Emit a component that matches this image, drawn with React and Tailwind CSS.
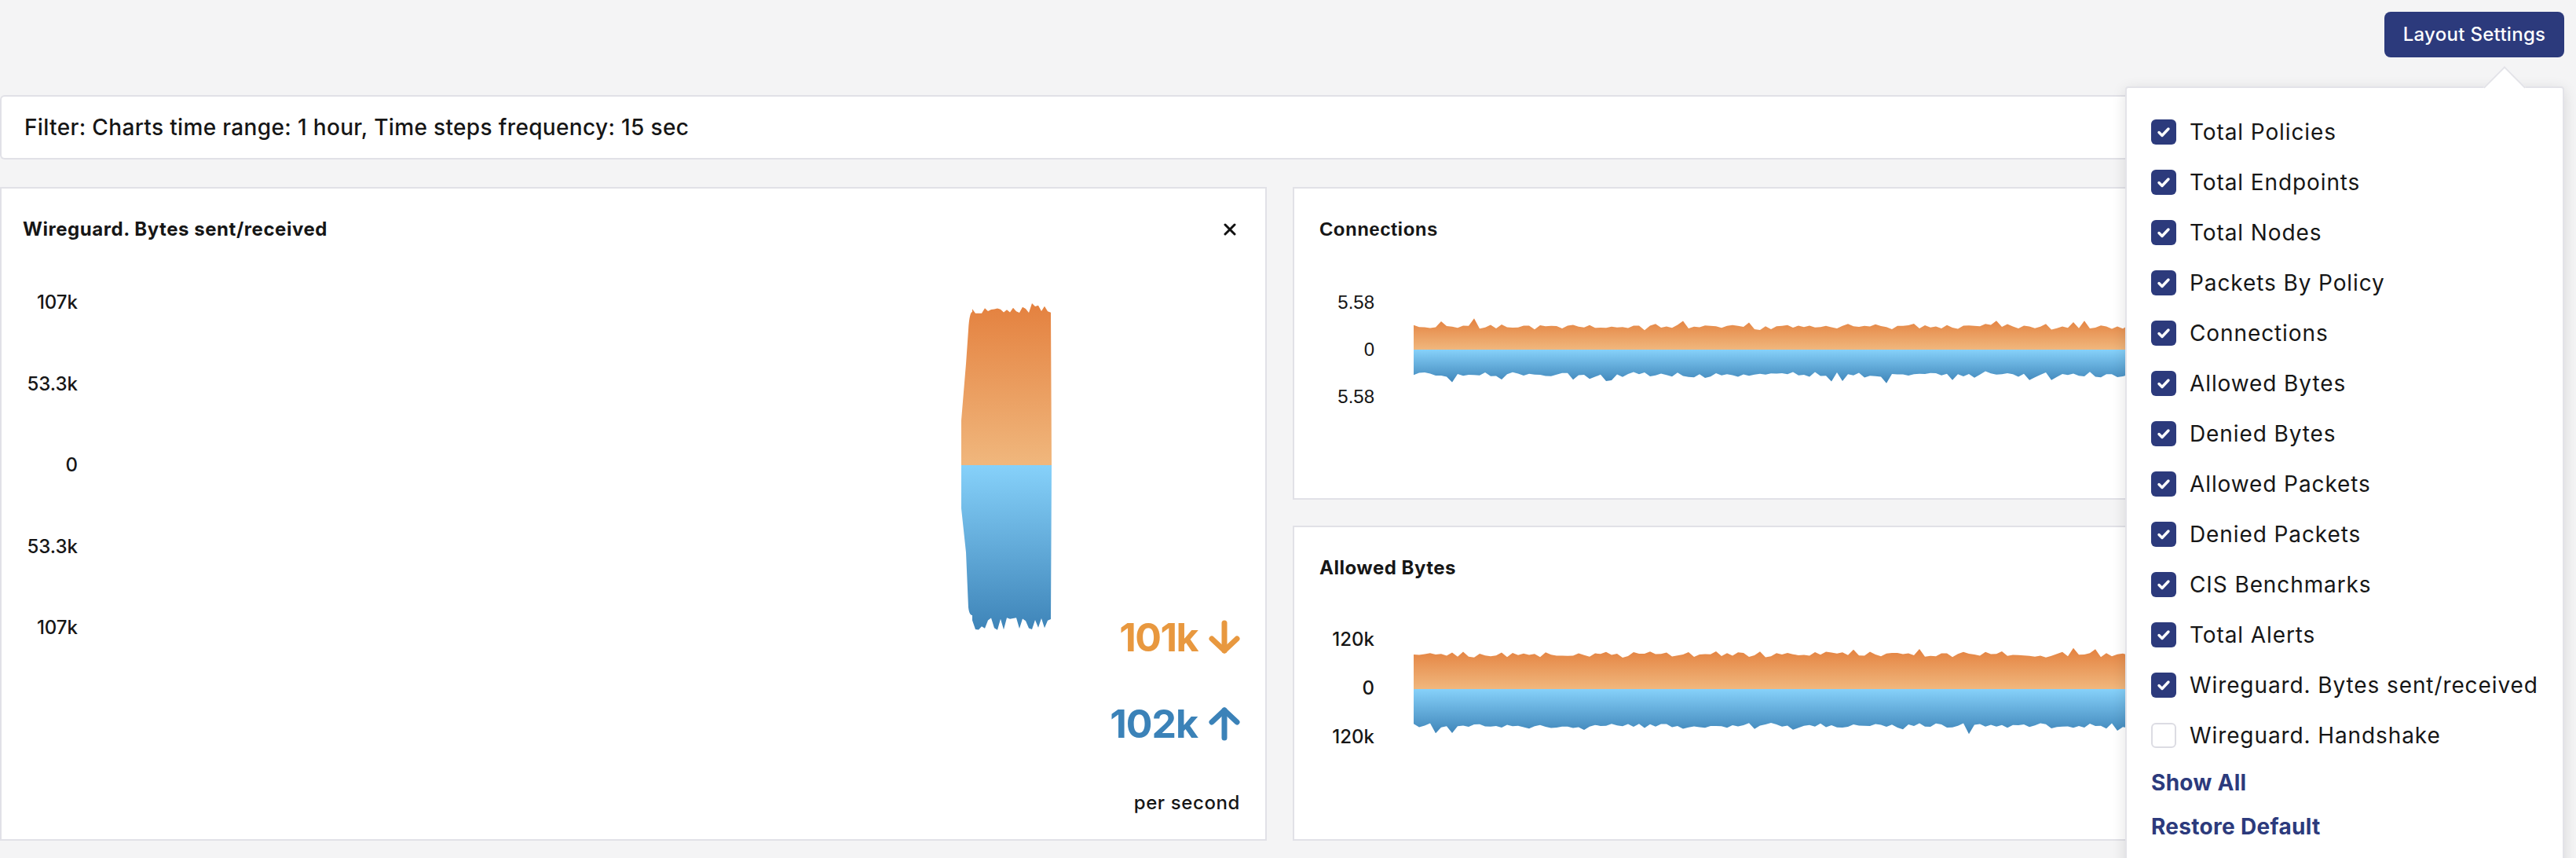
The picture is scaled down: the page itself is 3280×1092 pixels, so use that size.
import React from "react";

// deterministic jitter so the charts look the same on every render
const rnd = (i, seed) => {
  const x = Math.sin(i * 12.9898 + seed * 78.233) * 43758.5453;
  return x - Math.floor(x);
};

const smooth = (i, seed) => rnd(i, seed) * 0.6 + rnd(i + 1, seed) * 0.4;

// wide strip area: orange above zero, blue below
const stripPath = (width, zero, amp, seed, up) => {
  const pts = [];
  for (let x = 0; x <= width; x += 7) {
    let v = amp + (smooth(x, seed) - 0.5) * 9;
    if (rnd(x, seed + 3) > 0.93) v += 7;
    pts.push(`L${x},${up ? zero - v : zero + v}`);
  }
  return `M0,${zero} ${pts.join(" ")} L${width},${zero} Z`;
};

const barTop = () => {
  const pts = [];
  for (let x = 1118; x <= 1219; x += 4) {
    const y = 22 + (smooth(x, 5) - 0.5) * 12 + (x > 1190 && x < 1205 ? -6 : 0);
    pts.push(`L${x},${y.toFixed(1)}`);
  }
  return `M1104,219 L1104,162 L1110,90 L1113,47 C1114,30 1116,24 1118,24 ${pts.join(" ")} L1219,219 Z`;
};

const barBottom = () => {
  const pts = [];
  for (let x = 1118; x <= 1219; x += 4) {
    const spike = rnd(x, 9) > 0.6 ? 12 : 0;
    const y = 412 + smooth(x, 11) * 6 + spike;
    pts.push(`L${x},${y.toFixed(1)}`);
  }
  return `M1104,219 L1104,274 L1110,330 L1113,400 C1114,408 1116,410 1118,410 ${pts.join(" ")} L1219,219 Z`;
};

const Grads = ({ id }) => (
  <defs>
    <linearGradient id={`o${id}`} x1="0" y1="0" x2="0" y2="1">
      <stop offset="0%" stopColor="#e4813f" />
      <stop offset="100%" stopColor="#f0b77d" />
    </linearGradient>
    <linearGradient id={`b${id}`} x1="0" y1="0" x2="0" y2="1">
      <stop offset="0%" stopColor="#86d1fa" />
      <stop offset="100%" stopColor="#3e84b8" />
    </linearGradient>
  </defs>
);

const Arrow = ({ color, up }) => (
  <svg width="40" height="44" viewBox="0 0 40 44" fill="none" stroke={color} strokeWidth="7" strokeLinecap="round" strokeLinejoin="round">
    {up ? (
      <>
        <path d="M20 40V5" />
        <path d="M4 20 20 5l16 15" />
      </>
    ) : (
      <>
        <path d="M20 4v35" />
        <path d="M4 24l16 15 16-15" />
      </>
    )}
  </svg>
);

const CheckBox = ({ checked }) =>
  checked ? (
    <span className="flex w-[32px] h-[32px] shrink-0 items-center justify-center rounded-[6px] bg-[#2c3a7c]">
      <svg width="20" height="20" viewBox="0 0 20 20" fill="none" stroke="white" strokeWidth="3.4" strokeLinecap="round" strokeLinejoin="round">
        <path d="M4 10.5l4 4 8-8.5" />
      </svg>
    </span>
  ) : (
    <span className="w-[32px] h-[32px] shrink-0 rounded-[6px] border-2 border-[#dcdce3] bg-white" />
  );

const items = [
  ["Total Policies", true],
  ["Total Endpoints", true],
  ["Total Nodes", true],
  ["Packets By Policy", true],
  ["Connections", true],
  ["Allowed Bytes", true],
  ["Denied Bytes", true],
  ["Allowed Packets", true],
  ["Denied Packets", true],
  ["CIS Benchmarks", true],
  ["Total Alerts", true],
  ["Wireguard. Bytes sent/received", true],
  ["Wireguard. Handshake", false],
];

const StripCard = ({ title, labels, height, zero, amp, seed, mt, labelFont, gap }) => (
  <div className="flex flex-col bg-white border-2 border-[#e1e1e7]" style={{ height }}>
    <div className={`pl-[32px] pt-[34px] text-[24px] leading-[36px] font-bold tracking-[0.5px] ${labelFont}`}>{title}</div>
    <div className="flex" style={{ marginTop: mt }}>
      <div className={`w-[102px] flex flex-col text-right text-[24px] leading-[24px] font-medium ${labelFont}`} style={{ gap }}>
        {labels.map((l, i) => (
          <span key={i}>{l}</span>
        ))}
      </div>
      <svg className="ml-[50px]" width="1420" height={zero * 2}>
        <Grads id={seed} />
        <path d={stripPath(1420, zero, amp, seed, true)} fill={`url(#o${seed})`} />
        <path d={stripPath(1420, zero, amp + 3, seed + 1, false)} fill={`url(#b${seed})`} />
      </svg>
    </div>
  </div>
);

export default function App() {
  return (
    <div className="relative w-[3280px] h-[1092px] overflow-hidden bg-[#f4f4f5] font-['Inter',sans-serif] text-[#161616]">
      <div className="flex justify-end h-[121px] pt-[15px] pr-[15px]">
        <button className="h-[58px] w-[229px] rounded-[8px] bg-[#2c3a7c] text-white text-[24px] font-medium tracking-[0.3px]">
          Layout Settings
        </button>
      </div>

      <div className="mr-[15px] h-[82px] flex items-center pl-[29px] bg-white border-2 border-r-0 border-[#e1e1e7] rounded-l-[6px] text-[28px] font-medium tracking-[0.35px]">
        Filter: Charts time range: 1 hour, Time steps frequency: 15 sec
      </div>

      <div className="grid grid-cols-[1613px_1613px] gap-x-[33px] mt-[35px]">
        {/* Wireguard bytes card */}
        <div className="flex flex-col h-[832px] bg-white border-2 border-[#e1e1e7]">
          <div className="flex items-center justify-between pl-[27px] pr-[37px] pt-[34px]">
            <span className="text-[24px] leading-[36px] font-bold tracking-[0.55px]">Wireguard. Bytes sent/received</span>
            <svg width="16" height="16" viewBox="0 0 16 16" stroke="#111" strokeWidth="3" strokeLinecap="round">
              <path d="M2 2l12 12M14 2 2 14" />
            </svg>
          </div>
          <div className="flex flex-1 pr-[32px] pb-[28px]">
            <div className="flex mt-[63px] h-[438px]">
              <div className="w-[97px] flex flex-col justify-between text-right text-[24px] leading-[24px] font-medium">
                <span>107k</span>
                <span>53.3k</span>
                <span>0</span>
                <span>53.3k</span>
                <span>107k</span>
              </div>
              <svg className="ml-[21px]" width="1220" height="438">
                <Grads id="w" />
                <path d={barTop()} fill="url(#ow)" />
                <path d={barBottom()} fill="url(#bw)" />
              </svg>
            </div>
            <div className="flex flex-1 flex-col items-end justify-end">
              <div className="flex items-center gap-[14px] text-[50px] leading-[60px] font-bold text-[#e8983f] tracking-[-1.5px]">
                101k <Arrow color="#e8983f" />
              </div>
              <div className="flex items-center gap-[14px] mt-[50px] text-[50px] leading-[60px] font-bold text-[#3b82b8] tracking-[-1px]">
                102k <Arrow color="#3b82b8" up />
              </div>
              <div className="mt-[53px] text-[24px] leading-[36px] font-medium tracking-[0.6px]">per second</div>
            </div>
          </div>
        </div>

        <div className="flex flex-col gap-[33px]">
          <StripCard
            title="Connections"
            labels={["5.58", "0", "5.58"]}
            height={398}
            zero={72}
            amp={29}
            seed={21}
            mt={63}
            gap={36}
            labelFont="font-['Liberation_Sans',Arial,sans-serif]"
          />
          <StripCard
            title="Allowed Bytes"
            labels={["120k", "0", "120k"]}
            height={401}
            zero={75}
            amp={44}
            seed={37}
            mt={61}
            gap={38}
            labelFont=""
          />
        </div>
      </div>

      {/* layout settings popover */}
      <div className="absolute left-[2706px] top-[110px] w-[559px] h-[1000px] bg-white border-2 border-[#e3e3e8] rounded-[4px] shadow-[0_4px_18px_rgba(0,0,0,0.12)]">
        <div className="absolute left-[462px] -top-[20px] w-[38px] h-[38px] rotate-45 bg-white border-l-2 border-t-2 border-[#e3e3e8]" />
        <div className="relative pt-[24px] pl-[31px]">
          {items.map(([label, checked]) => (
            <div key={label} className="flex items-center gap-[17px] h-[64px]">
              <CheckBox checked={checked} />
              <span className="text-[28px] font-normal tracking-[0.9px]">{label}</span>
            </div>
          ))}
          <div className="text-[28px] leading-[56px] font-bold text-[#2c3a7c] tracking-[0.3px]">Show All</div>
          <div className="text-[28px] leading-[56px] font-bold text-[#2c3a7c] tracking-[0.3px]">Restore Default</div>
        </div>
      </div>
    </div>
  );
}
